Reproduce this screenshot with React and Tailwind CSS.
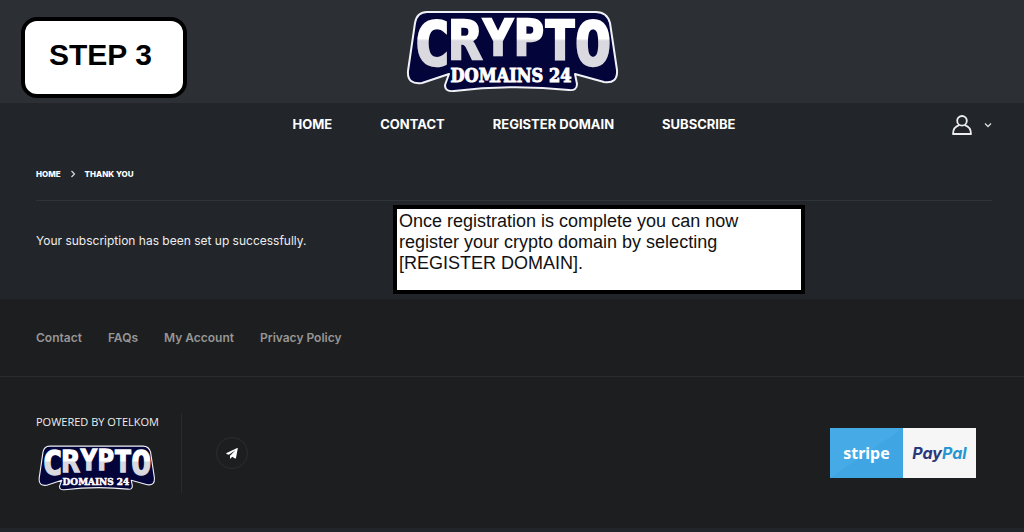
import React from "react";

const NAV = ["Home", "Contact", "Register Domain", "Subscribe"];
const LINKS = ["Contact", "FAQs", "My Account", "Privacy Policy"];

const LETTERS = [
  { ch: "C", x: 33, y: 65, size: 60 },
  { ch: "R", x: 66, y: 59, size: 54 },
  { ch: "Y", x: 99, y: 55, size: 50 },
  { ch: "P", x: 130, y: 55, size: 50 },
  { ch: "T", x: 161, y: 59, size: 54 },
  { ch: "O", x: 194, y: 65, size: 60 },
];

function Logo({ id, className }) {
  return (
    <svg viewBox="7 10 212 83" className={className} role="img" aria-label="Crypto Domains 24">
      <defs>
        <linearGradient id={id} gradientUnits="userSpaceOnUse" x1="0" y1="16" x2="0" y2="70">
          <stop offset="0.42" stopColor="#ffffff" />
          <stop offset="0.46" stopColor="#d9d9df" />
        </linearGradient>
      </defs>
      <path
        d="M28 12 H197 Q208 12 211 23 L218 70 Q219 84 205 82 L176 74 L178 84 Q178 91 170 90 Q113 84 55 91 Q46 92 46 85 L50 74 L23 83 Q8 85 9 71 L16 23 Q18 12 28 12Z"
        fill="#03043a"
        stroke="#f1f1f8"
        strokeWidth="2"
        strokeLinejoin="round"
      />
      <g fill={`url(#${id})`} stroke={`url(#${id})`} strokeWidth="2.4" textAnchor="middle" fontFamily="'DejaVu Sans Mono', monospace" fontWeight="700">
        {LETTERS.map((l) => (
          <text key={l.ch} x={l.x} y={l.y} fontSize={l.size}>{l.ch}</text>
        ))}
      </g>
      <text x="112" y="82" textAnchor="middle" fontSize="18" fontWeight="700" fill="#ffffff" stroke="#ffffff" strokeWidth="0.9" fontFamily="'DejaVu Serif Condensed', 'DejaVu Serif', serif">
        DOMAINS 24
      </text>
    </svg>
  );
}

export default function App() {
  return (
    <div className="relative min-h-screen bg-[#222529] font-['Inter','Open_Sans',sans-serif] text-white">
      <header>
        <div className="flex justify-center bg-[#2c2f33] pt-[10px] pb-[10px]">
          <a href="#home"><Logo id="shade-top" className="block w-[212px] overflow-visible" /></a>
        </div>
        <div className="relative flex h-11 items-center justify-center pr-8 pl-9">
          <nav className="flex gap-12 text-[13px] font-bold uppercase">
            {NAV.map((n) => <a key={n} href="#nav" className="whitespace-nowrap">{n}</a>)}
          </nav>
          <button type="button" aria-label="Account" className="absolute right-8 flex items-center gap-3">
            <svg viewBox="0 0 20 20" className="h-5 w-5" fill="none" stroke="#eeeeee" strokeWidth="1.8">
              <circle cx="10" cy="5.8" r="4.8" />
              <path d="M7.2 10.2 C3 11.5 1 14.5 1 19 H19 C19 14.5 17 11.5 12.8 10.2" strokeLinejoin="round" />
            </svg>
            <svg viewBox="0 0 8 8" className="h-2 w-2" fill="none" stroke="#dddddd" strokeWidth="1.3">
              <path d="M1 2.5 L4 5.5 L7 2.5" />
            </svg>
          </button>
        </div>
      </header>

      <main className="pr-8 pb-12 pl-9">
        <nav aria-label="Breadcrumb" className="flex h-[54px] items-center gap-2 border-b border-[#303338] text-[8px] font-extrabold uppercase">
          <a href="#home">Home</a>
          <svg viewBox="0 0 8 8" className="h-2 w-2" fill="none" stroke="#dddddd" strokeWidth="1.2">
            <path d="M2.5 1 L5.5 4 L2.5 7" />
          </svg>
          <span>Thank you</span>
        </nav>
        <p className="pt-[30px] text-[12px] leading-5 text-[#eeeeee]">Your subscription has been set up successfully.</p>
      </main>

      <footer className="border-b-4 border-[#222529] bg-[#1d1e20]">
        <nav aria-label="Footer" className="flex h-[78px] items-center gap-[26px] border-b border-[#292b2e] pl-9 text-[12px] font-semibold text-[#969696]">
          {LINKS.map((n) => <a key={n} href="#footer">{n}</a>)}
        </nav>
        <div className="flex items-center justify-between pt-9 pr-12 pb-[35px] pl-9">
          <div className="flex items-center">
            <div className="flex h-20 w-[146px] flex-col border-r border-[#292b2e]">
              <p className="font-['Open_Sans',sans-serif] text-[11px] leading-[18px] font-medium whitespace-nowrap text-[#eeeeee]">POWERED BY OTELKOM</p>
              <Logo id="shade-bottom" className="mt-3.5 ml-0.5 block w-[117px] overflow-visible" />
            </div>
            <a href="#telegram" aria-label="Telegram" className="ml-[34px] flex h-8 w-8 items-center justify-center rounded-full border border-[#2b2d30]">
              <svg viewBox="0 0 12 11" className="h-[11px] w-3" fill="#ffffff">
                <path d="M11.8 0.3 L10 10 Q9.8 10.8 9 10.4 L6.2 8.7 L4.7 10.6 Q4.2 11 4 10.3 L4 7.8 L9.5 2.2 L2.8 6.8 L0.5 5.9 Q0 5.5 0.6 5.1 L11.2 0.1 Q11.8 -0.1 11.8 0.3Z" />
              </svg>
            </a>
          </div>
          <div className="flex h-[50px] w-[146px] font-bold">
            <div className="flex flex-1 items-center justify-center bg-linear-to-br from-[#46aae6] from-50% to-[#3fa6e3] to-50% font-['Noto_Sans',sans-serif] text-[16px] font-bold">stripe</div>
            <div className="flex flex-1 items-center justify-center bg-[#f6f6f6] text-[16px] font-bold text-[#29397c] italic">Pay<span className="text-[#2796d3]">Pal</span></div>
          </div>
        </div>
      </footer>

      <div className="absolute top-[17px] left-[21px] h-[81px] w-[166px] rounded-2xl border-4 border-black bg-white pt-4 pl-6 font-['Liberation_Sans',sans-serif] text-[30px] leading-9 font-bold text-black">STEP 3</div>
      <div className="absolute top-[205px] left-[393px] h-[89px] w-[412px] border-4 border-black bg-white pt-0.5 pl-0.5 font-['Liberation_Sans',sans-serif] text-[18px] leading-[21px] text-[#111111]">
        Once registration is complete you can now<br />register your crypto domain by selecting<br />[REGISTER DOMAIN].
      </div>
    </div>
  );
}
